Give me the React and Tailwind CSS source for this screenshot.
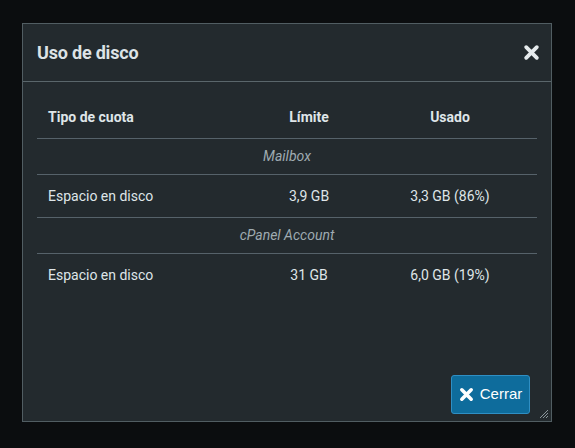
import React from "react";

const rows = [
  { section: "Mailbox", name: "Espacio en disco", limit: "3,9 GB", used: "3,3 GB (86%)" },
  { section: "cPanel Account", name: "Espacio en disco", limit: "31 GB", used: "6,0 GB (19%)" },
];

function XIcon({ className, sw = 3.6 }) {
  return (
    <svg viewBox="0 0 16 16" className={className} fill="none" stroke="currentColor" strokeWidth={sw} strokeLinecap="round">
      <path d="M3 3l10 10M13 3L3 13" />
    </svg>
  );
}

export default function App() {
  return (
    <div className="h-[448px] w-[575px] bg-[#0b0d0f] pl-[22px] pt-[23px] text-[#dfe5e8]" style={{ fontFamily: "Roboto, 'Noto Sans', sans-serif" }}>
      <div className="relative flex h-[399px] w-[530px] flex-col border border-[#515d62] bg-[#232a2e]">
        <div className="flex h-[58px] items-center justify-between border-b border-[#5a666b] pl-[14px] pr-[11px]">
          <h1 className="text-[18px] font-bold tracking-[-0.2px] text-[#dde3e6]">Uso de disco</h1>
          <button type="button" className="text-[#e6ebed]">
            <XIcon className="h-[17px] w-[17px]" />
          </button>
        </div>

        <div className="px-[14px] pt-[15px] text-[14px]">
          <div className="grid h-[42px] grid-cols-[218px_108px_174px] items-center border-b border-[#56626a] font-bold">
            <div className="pl-[11px]">Tipo de cuota</div>
            <div className="text-center">Límite</div>
            <div className="text-center">Usado</div>
          </div>
          {rows.map((r, i) => (
            <React.Fragment key={r.section}>
              <div className="flex h-[36px] items-center justify-center border-b border-[#56626a] italic text-[#9fabb1]">
                {r.section}
              </div>
              <div className={`grid h-[43px] grid-cols-[218px_108px_174px] items-center ${i === 0 ? "border-b border-[#56626a]" : ""}`}>
                <div className="pl-[11px]">{r.name}</div>
                <div className="text-center">{r.limit}</div>
                <div className="text-center">{r.used}</div>
              </div>
            </React.Fragment>
          ))}
        </div>

        <div className="mt-auto flex justify-end pb-[7px] pr-[21px]">
          <button type="button" className="flex h-[39px] w-[79px] items-center justify-center gap-[6px] rounded-[3px] border border-[#2f8fc4] bg-[#0e6c9c] text-[15px] text-white" style={{ fontFamily: "'Liberation Sans', Arial, sans-serif" }}>
            <XIcon className="h-[15px] w-[15px]" sw={3.8} />
            Cerrar
          </button>
        </div>

        <svg className="absolute bottom-[2px] right-[2px] h-[10px] w-[10px] text-[#8a969b]" viewBox="0 0 10 10" stroke="currentColor" strokeWidth="1">
          <path d="M9 1L1 9M9 4L4 9M9 7L7 9" />
        </svg>
      </div>
    </div>
  );
}
